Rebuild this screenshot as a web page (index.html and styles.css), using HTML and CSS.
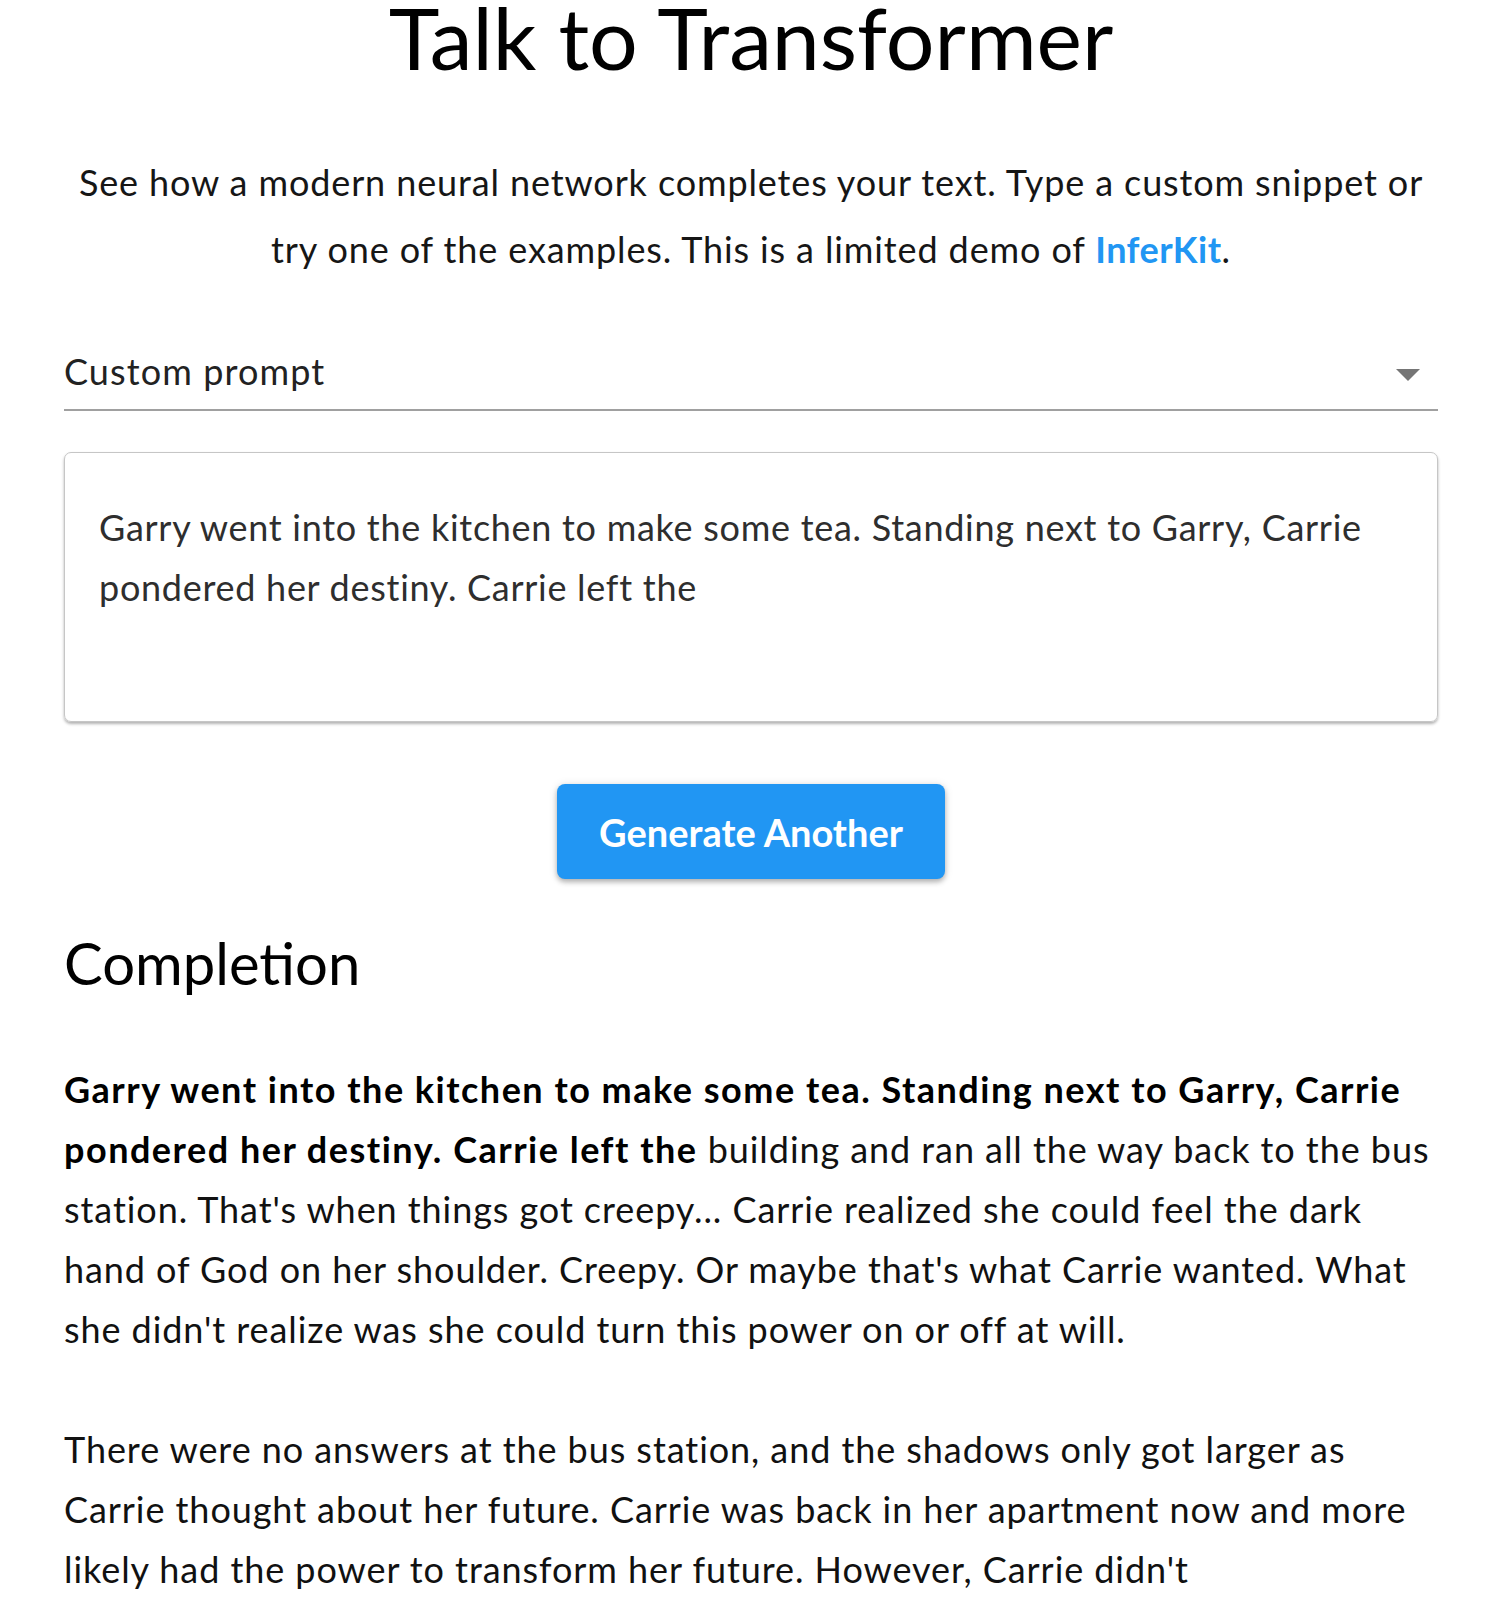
FILE: index.html
```html
<!DOCTYPE html>
<html lang="en">
<head>
<meta charset="utf-8">
<title>Talk to Transformer</title>
<link rel="stylesheet" href="styles.css">
</head>
<body>
<main class="page">
  <h1 class="title">Talk to Transformer</h1>
  <p class="intro">See how a modern neural network completes your text. Type a custom snippet or try one of the examples. This is a limited demo of <a class="link" href="#">InferKit</a>.</p>

  <div class="select">
    <span class="select-value">Custom prompt</span>
    <span class="select-arrow"></span>
  </div>

  <div class="prompt-card">
    <div class="prompt-text">Garry went into the kitchen to make some tea. Standing next to Garry, Carrie pondered her destiny. Carrie left the</div>
  </div>

  <div class="actions">
    <button class="btn" type="button">Generate Another</button>
  </div>

  <h2 class="section-title">Completion</h2>
  <div class="completion"><strong>Garry went into the kitchen to make some tea. Standing next to Garry, Carrie pondered her destiny. Carrie left the</strong> building and ran all the way back to the bus station. That's when things got creepy... Carrie realized she could feel the dark hand of God on her shoulder. Creepy. Or maybe that's what Carrie wanted. What she didn't realize was she could turn this power on or off at will.

There were no answers at the bus station, and the shadows only got larger as Carrie thought about her future. Carrie was back in her apartment now and more likely had the power to transform her future. However, Carrie didn't</div>
</main>
</body>
</html>
```

FILE: styles.css
```css
* { box-sizing: border-box; }

html, body {
  margin: 0;
  padding: 0;
  background: #ffffff;
}

body {
  font-family: Lato, "Noto Sans", sans-serif;
  color: #111111;
}

.page {
  padding: 0 63px 0 64px;
}

.title {
  margin: 0;
  font-size: 86px;
  font-weight: 400;
  line-height: 74px;
  text-align: center;
  color: #000000;
}

.intro {
  margin: 75px 0 0;
  font-size: 36px;
  letter-spacing: 0.88px;
  line-height: 67px;
  text-align: center;
  color: #161616;
}

.link {
  color: #2196f3;
  font-weight: 700;
  letter-spacing: 0.5px;
  text-decoration: none;
}

.select {
  margin-top: 63px;
  display: flex;
  align-items: center;
  justify-content: space-between;
  padding: 0 18px 13px 0;
  border-bottom: 2px solid #a0a0a0;
}

.select-value {
  font-size: 36px;
  letter-spacing: 1.1px;
  line-height: 50px;
  color: #222222;
}

.select-arrow {
  width: 0;
  height: 0;
  border-left: 12px solid transparent;
  border-right: 12px solid transparent;
  border-top: 12px solid #757575;
  margin-top: 7px;
}

.prompt-card {
  margin-top: 41px;
  height: 270px;
  padding: 44px 34px 0;
  border: 1px solid #c6c6c6;
  border-radius: 7px;
  box-shadow: 0 2px 3px rgba(0, 0, 0, 0.3);
}

.prompt-text {
  font-size: 36px;
  letter-spacing: 0.72px;
  line-height: 60px;
  color: #2e2e2e;
}

.actions {
  margin-top: 62px;
  display: flex;
  justify-content: center;
}

.btn {
  height: 95px;
  padding: 0 42px;
  border: none;
  border-radius: 8px;
  background: #2196f3;
  color: #ffffff;
  font-family: Lato, "Noto Sans", sans-serif;
  font-size: 38px;
  font-weight: 700;
  box-shadow: 0 3px 5px rgba(0, 0, 0, 0.25), 0 1px 10px rgba(0, 0, 0, 0.12);
  cursor: pointer;
}

.section-title {
  margin: 50px 0 0;
  font-size: 58px;
  font-weight: 400;
  line-height: 68px;
  color: #000000;
}

.completion {
  margin-top: 62px;
  margin-right: -6px;
  font-size: 36px;
  letter-spacing: 0.93px;
  line-height: 60px;
  white-space: pre-wrap;
  color: #111111;
}

.completion strong {
  font-weight: 700;
  letter-spacing: 1.5px;
  color: #000000;
}
```
